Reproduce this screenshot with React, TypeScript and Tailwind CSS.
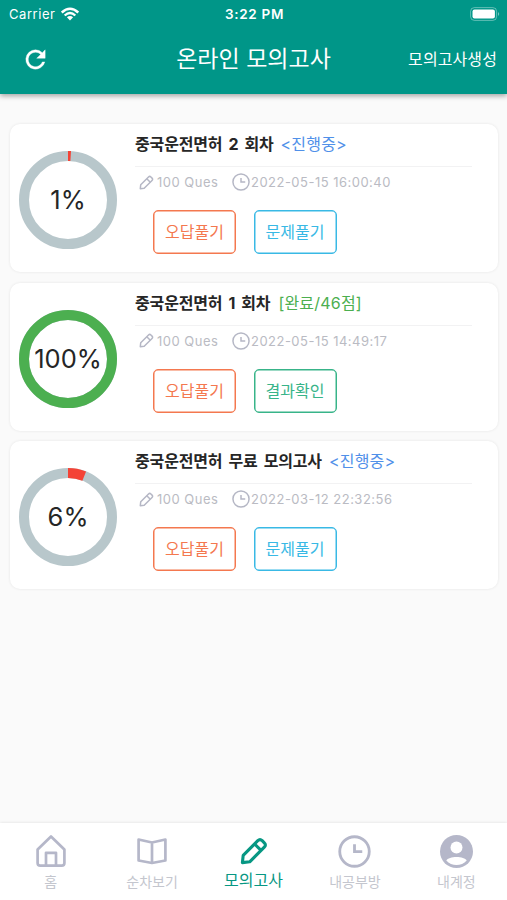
import React from "react";

type Tone = "blue" | "green";

interface Exam {
  percent: number;
  title: string;
  status: string;
  tone: Tone;
  date: string;
  action: string;
}

const exams: Exam[] = [
  { percent: 1, title: "중국운전면허 2 회차", status: "<진행중>", tone: "blue", date: "2022-05-15 16:00:40", action: "문제풀기" },
  { percent: 100, title: "중국운전면허 1 회차", status: "[완료/46점]", tone: "green", date: "2022-05-15 14:49:17", action: "결과확인" },
  { percent: 6, title: "중국운전면허 무료 모의고사", status: "<진행중>", tone: "blue", date: "2022-03-12 22:32:56", action: "문제풀기" },
];

function PencilIcon({ className, weight }: { className: string; weight: number }) {
  return (
    <svg viewBox="0 0 28 28" className={className} fill="none" stroke="currentColor" strokeWidth={weight} strokeLinejoin="round">
      <path d="M2.4 25.6 L3.2 18.3 L17.8 3.7 Q20 1.5 22.2 3.7 L24.3 5.8 Q26.5 8 24.3 10.2 L9.7 24.8 Z" />
      <path d="M14.6 7 L21 13.4" />
    </svg>
  );
}

function ClockIcon({ className, weight }: { className: string; weight: number }) {
  return (
    <svg viewBox="0 0 34 34" className={className} fill="none" stroke="currentColor" strokeWidth={weight}>
      <circle cx="17" cy="17" r="15.2" />
      <path d="M17 9.5 V17.2 H25" />
    </svg>
  );
}

function ProgressRing({ percent }: { percent: number }) {
  const length = 2 * Math.PI * 44;
  return (
    <div className="relative h-[98px] w-[98px] shrink-0">
      <svg viewBox="0 0 98 98" className="h-full w-full" fill="none" strokeWidth="10">
        <circle cx="49" cy="49" r="44" stroke="#b8c7cb" />
        <circle
          cx="49"
          cy="49"
          r="44"
          stroke={percent === 100 ? "#4caf50" : "#f44336"}
          strokeDasharray={`${(length * percent) / 100} ${length}`}
          transform="rotate(-90 49 49)"
        />
      </svg>
      <span className="absolute inset-0 flex items-center justify-center pt-[1px] text-[25.5px] text-[#262626]">{percent}%</span>
    </div>
  );
}

function ExamCard({ exam }: { exam: Exam }) {
  const done = exam.tone === "green";
  return (
    <article className="flex h-[148px] rounded-[10px] bg-white pl-[9px] shadow-[0_0_3px_rgba(0,0,0,0.09)]">
      <div className="pt-[27px]">
        <ProgressRing percent={exam.percent} />
      </div>
      <div className="ml-[18px] w-[337px]">
        <h2 className="flex h-[43px] items-center whitespace-nowrap border-b border-[#f2f2f3] pb-[2px] text-[16px] leading-[24px]">
          <span className="font-bold tracking-[-0.15px] text-[#262626] [word-spacing:2.4px]">{exam.title}</span>
          <span className={done ? "ml-2 tracking-[0.2px] text-[#4caf50]" : "ml-[7px] tracking-[0.2px] text-[#5090e9]"}>{exam.status}</span>
        </h2>
        <div className="mt-[5px] flex h-[22px] items-center whitespace-nowrap text-[13px] text-[#babbc3]">
          <PencilIcon className="mb-[2px] ml-1 h-[15px] w-[15px] text-[#b5b7c5]" weight={2.8} />
          <span className="ml-[3px] w-[75px] tracking-[0.5px]">100 Ques</span>
          <ClockIcon className="mb-[2px] h-[18px] w-[18px] text-[#b5b7c5]" weight={2.8} />
          <span className="ml-[1px] tracking-[0.48px]">{exam.date}</span>
        </div>
        <div className="mt-[16px] flex gap-[17.5px] pl-[18px] text-[16px]">
          <button className="h-[44px] w-[83px] rounded-[5px] border border-[#f4784f] text-[#f4784f] shadow-[inset_0_0_0_0.5px_#f4784f]">오답풀기</button>
          <button
            className={
              done
                ? "h-[44px] w-[83px] rounded-[5px] border border-[#38b489] text-[#38b489] shadow-[inset_0_0_0_0.5px_#38b489]"
                : "h-[44px] w-[83px] rounded-[5px] border border-[#39b9e5] text-[#39b9e5] shadow-[inset_0_0_0_0.5px_#39b9e5]"
            }
          >
            {exam.action}
          </button>
        </div>
      </div>
    </article>
  );
}

function NavItem({ label, active, children }: { label: string; active?: boolean; children: React.ReactNode }) {
  return (
    <div className={active ? "flex flex-1 flex-col items-center text-[#079783]" : "flex flex-1 flex-col items-center text-[#b5b7c9]"}>
      <div className="flex h-[34px] items-center justify-center">{children}</div>
      <span className={active ? "mt-[1px] text-[16px] leading-[22px]" : "mt-[4px] text-[14px] leading-[20px] text-[#c4c6ce]"}>{label}</span>
    </div>
  );
}

export default function App() {
  return (
    <div className="flex h-[900px] w-[507px] flex-col overflow-hidden bg-[#fafafa] font-['Inter','Noto_Sans_CJK_KR',sans-serif]">
      <header className="z-10 h-[94px] shrink-0 bg-[#009688] text-white shadow-[0_2px_5px_rgba(0,0,0,0.35)]">
        <div className="grid h-[27px] grid-cols-3 items-center pl-[9px] pr-[7px] text-[13px] leading-[27px]">
          <div className="flex items-center gap-[6px]">
            <span className="tracking-[0.55px]">Carrier</span>
            <svg viewBox="0 0 18 14" className="h-[14px] w-[18px]" fill="none" stroke="currentColor" strokeWidth="2.4">
              <path d="M.8 5.5 Q9 -2 17.2 5.5M3.7 8.5 Q9 3.5 14.3 8.5" />
              <path d="M9 13.5 L5.9 10.3 Q9 7.7 12.1 10.3 Z" fill="currentColor" stroke="none" />
            </svg>
          </div>
          <span className="whitespace-nowrap pt-[1px] text-center text-[13.5px] font-semibold tracking-[0.7px]">3:22 PM</span>
          <svg viewBox="0 0 30 14" className="h-[14px] w-[30px] justify-self-end" fill="none">
            <rect x=".6" y=".6" width="26" height="12.8" rx="3.8" stroke="white" strokeOpacity=".38" />
            <rect x="2.5" y="2.4" width="22.4" height="9.2" rx="2" fill="white" />
            <path d="M28 5 Q30.4 7 28 9Z" fill="white" fillOpacity=".45" />
          </svg>
        </div>
        <div className="grid h-[64px] grid-cols-[1fr_auto_1fr] items-center pl-[10px] pr-[10px]">
          <svg viewBox="0 0 24 24" className="ml-[11px] h-[29px] w-[29px]" fill="currentColor" stroke="currentColor" strokeWidth=".3">
            <path d="M17.65 6.35A7.96 7.96 0 0 0 12 4a8 8 0 1 0 7.73 10h-2.08A6 6 0 1 1 12 6c1.66 0 3.14.69 4.22 1.78L13 11h7V4z" />
          </svg>
          <h1 className="text-[23px] leading-[32px]">온라인 모의고사</h1>
          <span className="justify-self-end text-[16px] tracking-[0.1px]">모의고사생성</span>
        </div>
      </header>

      <main className="flex flex-1 flex-col gap-[10.5px] pl-[10px] pr-[9px] pt-[30px]">
        {exams.map((exam) => (
          <ExamCard key={exam.title} exam={exam} />
        ))}
      </main>

      <nav className="flex h-[77px] shrink-0 bg-white pt-[11px] shadow-[0_0_3px_rgba(0,0,0,0.12)]">
        <NavItem label="홈">
          <svg viewBox="0 0 30 34" className="h-[34px] w-[30px]" fill="none" stroke="currentColor" strokeWidth="2.7" strokeLinejoin="round">
            <path d="M1.6 15.5 L15 2.5 L28.4 15.5 V29 Q28.4 31.7 25.7 31.7 H4.3 Q1.6 31.7 1.6 29 Z" />
            <path d="M10 31.5 V18.8 H20 V31.5" />
          </svg>
        </NavItem>
        <NavItem label="순차보기">
          <svg viewBox="0 0 30 28" className="h-[28px] w-[30px]" fill="none" stroke="currentColor" strokeWidth="2.7" strokeLinejoin="round">
            <path d="M1.6 2.5 L15 5.5 L28.4 2.5 V23.5 L15 26 L1.6 23.5 Z M15 5.5 V26" />
          </svg>
        </NavItem>
        <NavItem label="모의고사" active>
          <PencilIcon className="h-[28px] w-[28px]" weight={3.1} />
        </NavItem>
        <NavItem label="내공부방">
          <ClockIcon className="h-[33px] w-[33px]" weight={2.9} />
        </NavItem>
        <NavItem label="내계정">
          <svg viewBox="0 0 33 33" className="h-[33px] w-[33px]">
            <circle cx="16.5" cy="16.5" r="16.5" fill="currentColor" />
            <circle cx="16.5" cy="12.5" r="6" fill="white" />
            <path d="M6.3 25.5 C8.5 20.8 24.5 20.8 26.7 25.5 C21.5 31.5 11.5 31.5 6.3 25.5 Z" fill="white" />
          </svg>
        </NavItem>
      </nav>
    </div>
  );
}
